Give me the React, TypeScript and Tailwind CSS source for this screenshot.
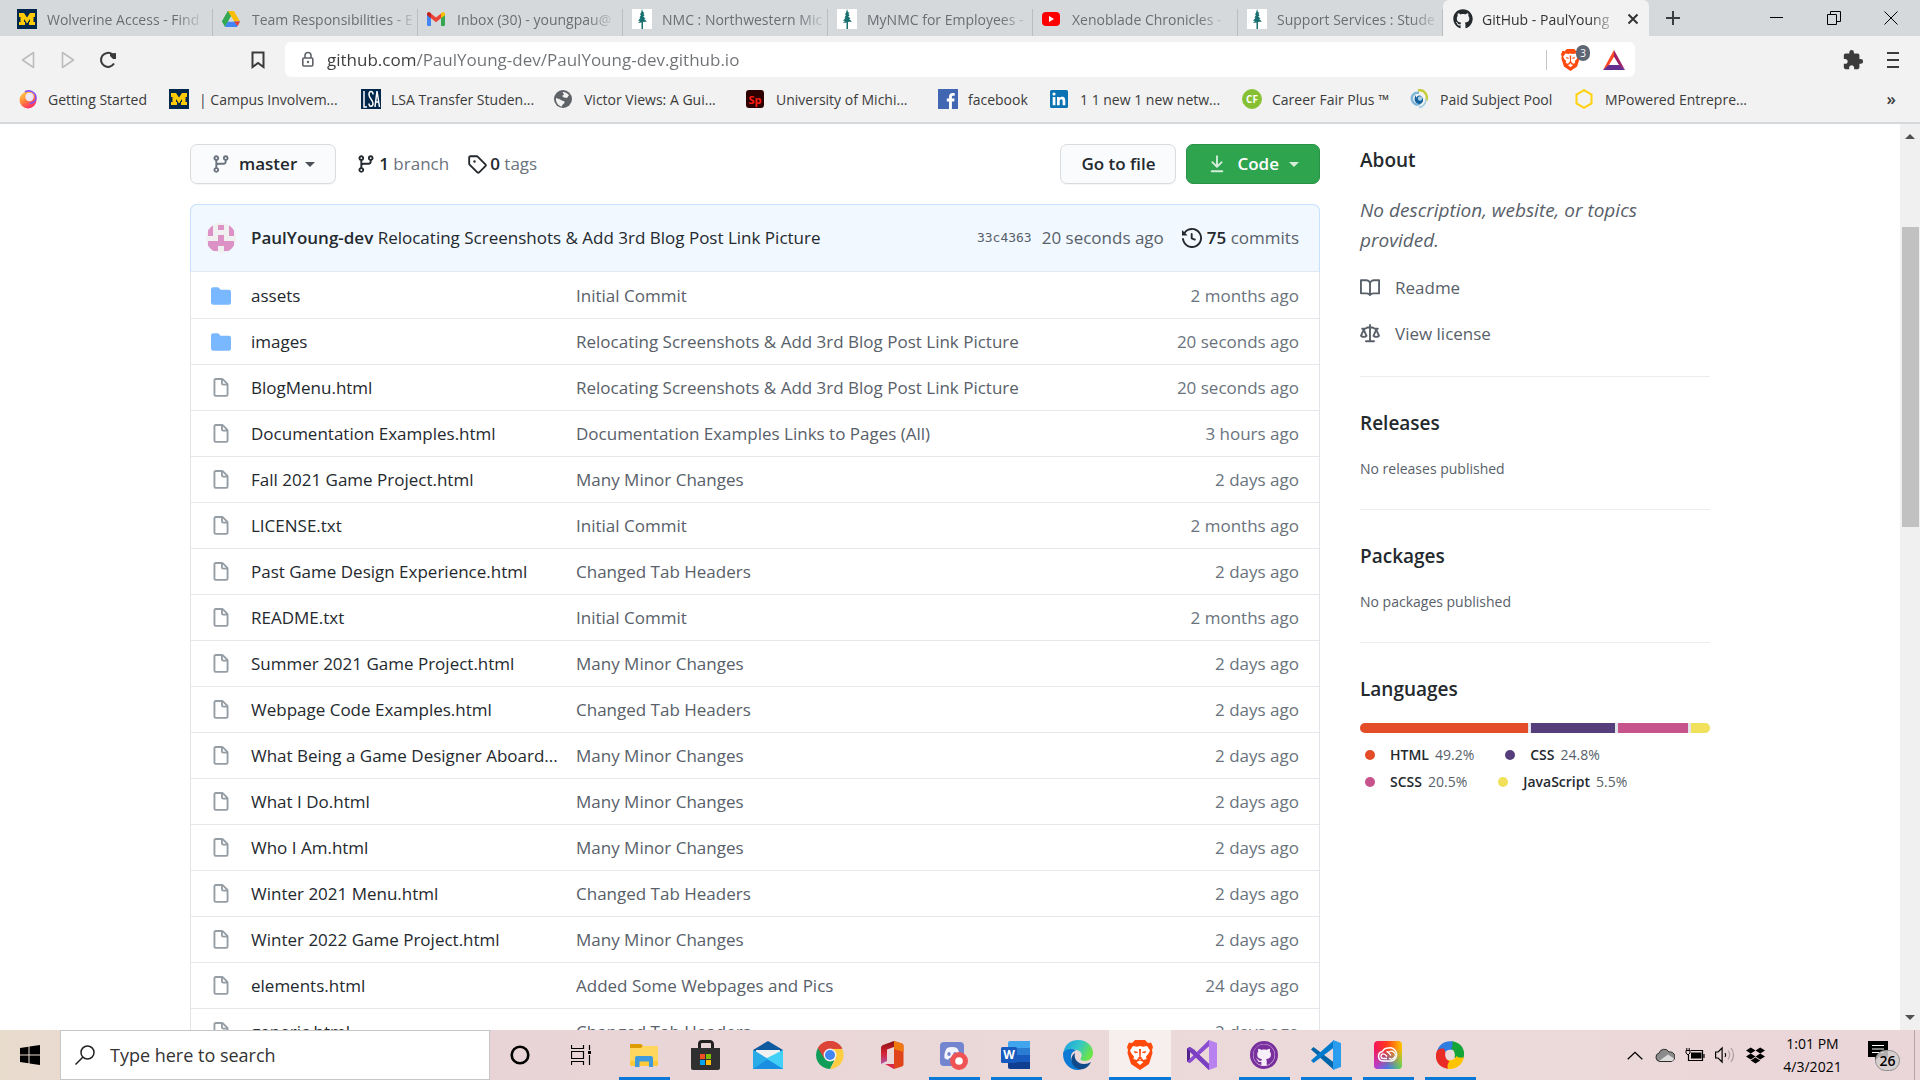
import type { ReactNode } from "react";
import { FaGithub, FaDropbox } from "react-icons/fa";
import { MdExtension } from "react-icons/md";

type IconProps = { className?: string };

/* ---------- 16px repository glyphs ---------- */

const glyphs = {
  branch:
    "M11.75 2.5a.75.75 0 100 1.5.75.75 0 000-1.5zm-2.25.75a2.25 2.25 0 113 2.122V6A2.5 2.5 0 0110 8.5H6a1 1 0 00-1 1v1.128a2.251 2.251 0 11-1.5 0V5.372a2.25 2.25 0 111.5 0v1.836A2.492 2.492 0 016 7h4a1 1 0 001-1v-.628A2.25 2.25 0 019.5 3.25zM4.25 12a.75.75 0 100 1.5.75.75 0 000-1.5zM3.5 3.25a.75.75 0 111.5 0 .75.75 0 01-1.5 0z",
  tag: "M2.5 7.775V2.75a.25.25 0 01.25-.25h5.025a.25.25 0 01.177.073l6.25 6.25a.25.25 0 010 .354l-5.025 5.025a.25.25 0 01-.354 0l-6.25-6.25a.25.25 0 01-.073-.177zm-1.5 0V2.75C1 1.784 1.784 1 2.75 1h5.025c.464 0 .91.184 1.238.513l6.25 6.25a1.75 1.75 0 010 2.474l-5.026 5.026a1.75 1.75 0 01-2.474 0l-6.25-6.25A1.75 1.75 0 011 7.775zM6 5a1 1 0 100 2 1 1 0 000-2z",
  file: "M3.75 1.5a.25.25 0 00-.25.25v11.5c0 .138.112.25.25.25h8.5a.25.25 0 00.25-.25V6H9.75A1.75 1.75 0 018 4.25V1.5H3.75zm5.75.56v2.19c0 .138.112.25.25.25h2.19L9.5 2.06zM2 1.75C2 .784 2.784 0 3.75 0h5.086c.464 0 .909.184 1.237.513l3.414 3.414c.329.328.513.773.513 1.237v8.086A1.75 1.75 0 0112.25 15h-8.5A1.75 1.75 0 012 13.25V1.75z",
  folder:
    "M1.75 1A1.75 1.75 0 000 2.75v10.5C0 14.216.784 15 1.75 15h12.5A1.75 1.75 0 0016 13.25v-8.5A1.75 1.75 0 0014.25 3h-6.5a.25.25 0 01-.2-.1l-.9-1.2c-.33-.44-.85-.7-1.4-.7h-3.5z",
  history:
    "M1.643 3.143L.427 1.927A.25.25 0 000 2.104V5.75c0 .138.112.25.25.25h3.646a.25.25 0 00.177-.427L2.715 4.215a6.5 6.5 0 11-1.18 4.458.75.75 0 10-1.493.154 8.001 8.001 0 101.6-5.684zM7.75 4a.75.75 0 01.75.75v2.992l2.028.812a.75.75 0 01-.557 1.392l-2.5-1A.75.75 0 017 8.25v-3.5A.75.75 0 017.75 4z",
  download:
    "M7.47 10.78a.75.75 0 001.06 0l3.75-3.75a.75.75 0 00-1.06-1.06L8.75 8.44V1.75a.75.75 0 00-1.5 0v6.69L4.78 5.97a.75.75 0 00-1.06 1.06l3.75 3.75zM3.75 13a.75.75 0 000 1.5h8.5a.75.75 0 000-1.5h-8.5z",
  book: "M0 1.75A.75.75 0 01.75 1h4.253c1.227 0 2.317.59 3 1.501A3.744 3.744 0 0111.006 1h4.245a.75.75 0 01.75.75v10.5a.75.75 0 01-.75.75h-4.507a2.25 2.25 0 00-1.591.659l-.622.621a.75.75 0 01-1.06 0l-.622-.621A2.25 2.25 0 005.258 13H.75a.75.75 0 01-.75-.75V1.75zm8.755 3a2.25 2.25 0 012.25-2.25H14.5v9h-3.757c-.71 0-1.4.201-1.992.572l.004-7.322zm-1.504 7.324l.004-5.073-.002-2.253A2.25 2.25 0 005.003 2.5H1.5v9h3.757a3.75 3.75 0 011.994.574z",
  law: "M8.75.75a.75.75 0 00-1.5 0V2h-.984c-.305 0-.604.08-.869.23l-1.288.737A.25.25 0 013.984 3H1.75a.75.75 0 000 1.5h.428L.066 9.192a.75.75 0 00.154.838l.53-.53-.53.53v.001l.002.002.002.002.006.006.016.015.045.04a3.514 3.514 0 00.686.45A4.492 4.492 0 003 11c.88 0 1.556-.22 2.023-.454a3.515 3.515 0 00.686-.45l.045-.04.016-.015.006-.006.002-.002.001-.002L5.25 9.5l.53.53a.75.75 0 00.154-.838L3.822 4.5h.162c.305 0 .604-.08.869-.23l1.289-.737a.25.25 0 01.124-.033h.984V13h-2.5a.75.75 0 000 1.5h6.5a.75.75 0 000-1.5h-2.5V3.5h.984a.25.25 0 01.124.033l1.29.736c.264.152.563.231.868.231h.162l-2.112 4.692a.75.75 0 00.154.838l.53-.53-.53.53v.001l.002.002.002.002.006.006.016.015.045.04a3.517 3.517 0 00.686.45A4.492 4.492 0 0013 11c.88 0 1.556-.22 2.023-.454a3.512 3.512 0 00.686-.45l.045-.04.01-.01.006-.005.006-.006.002-.002.001-.002-.529-.531.53.53a.75.75 0 00.154-.838L13.823 4.5h.427a.75.75 0 000-1.5h-2.234a.25.25 0 01-.124-.033l-1.29-.736A1.75 1.75 0 009.735 2H8.75V.75zM1.695 9.227c.285.135.718.273 1.305.273s1.02-.138 1.305-.273L3 6.327l-1.305 2.9zm10 0c.285.135.718.273 1.305.273s1.02-.138 1.305-.273L13 6.327l-1.305 2.9z",
};

function Glyph({ name, className = "" }: { name: keyof typeof glyphs; className?: string }) {
  return (
    <svg viewBox="0 0 16 16" fill="currentColor" className={`size-5 shrink-0 ${className}`} aria-hidden="true">
      <path fillRule="evenodd" d={glyphs[name]} />
    </svg>
  );
}

function Caret({ className = "" }: IconProps) {
  return (
    <svg viewBox="0 0 10 5" fill="currentColor" className={`w-[10px] h-[5px] ${className}`} aria-hidden="true">
      <path d="M0 0h10L5 5z" />
    </svg>
  );
}

/* ---------- Favicons ---------- */

function MichiganIcon() {
  return (
    <svg viewBox="0 0 20 20" className="size-5 shrink-0" aria-hidden="true">
      <path fill="#00274c" d="M0 0h20v20H0z" />
      <path fill="#ffcb05" d="M2 4h5l3 4.500L13 4h5v4h-1.500v5H18v3h-6v-3h1v-3l-3 4.500L7 10v3h1v3H2v-3h1.500V8H2z" />
    </svg>
  );
}
function DriveIcon() {
  return (
    <svg viewBox="0 0 18 16" className="w-[18px] h-4 shrink-0" aria-hidden="true">
      <path fill="#188038" d="M6 0h3v5.200L4 14 0 10.500z" />
      <path fill="#34a853" d="M6 0h3l.5 5L3 16 0 10.500z" />
      <path fill="#fbbc04" d="M6 0h6l6 10.500h-6z" />
      <path fill="#4285f4" d="M6 10.500h12L15 16H3z" />
      <path fill="#ea4335" d="M12 10.500h6L15.500 15z" />
      <path fill="#d5d9dc" d="m9 5.300 3 5.200H6z" />
    </svg>
  );
}
function GmailIcon() {
  return (
    <svg viewBox="0 0 18 14" className="w-[18px] h-[14px] shrink-0" aria-hidden="true">
      <path fill="#4285f4" d="M0 2h4v12H1.300A1.300 1.300 0 0 1 0 12.700z" />
      <path fill="#34a853" d="M14 2h4v10.700a1.300 1.300 0 0 1-1.300 1.300H14z" />
      <path fill="#ea4335" d="m4 1.500 5 4 5-4v4.800l-5 4-5-4z" />
      <path fill="#c5221f" d="M0 2C0 .2 2.200-.6 3.500.8L4 1.300v5L0 3.200z" />
      <path fill="#fbbc04" d="M18 2c0-1.800-2.200-2.600-3.500-1.200l-.5.5v5l4-3.100z" />
    </svg>
  );
}
function TreeIcon() {
  return (
    <svg viewBox="0 0 20 20" className="size-5 shrink-0" aria-hidden="true">
      <path fill="#fff" d="M0 0h20v20H0z" />
      <path fill="#17706f" d="m10 0 1 3 1.500 1-1 .8L12.500 7l-1.500.2 2.500 2.300-1.500.5 3 2.500-4 .5V20H9.500v-6.500L6 14l2-2-2-.5L8.500 9 7.500 8.500 9 6 8 5.500 9.300 3z" />
    </svg>
  );
}
function YoutubeIcon() {
  return (
    <svg viewBox="0 0 18 14" className="w-[18px] h-[14px] shrink-0" aria-hidden="true">
      <rect width="18" height="14" rx="4" fill="red" />
      <path fill="#fff" d="m7 4 5 3-5 3z" />
    </svg>
  );
}
function FirefoxIcon() {
  return (
    <svg viewBox="0 0 20 20" className="size-5 shrink-0" aria-hidden="true">
      <defs>
        <linearGradient id="ff2" x1="0" y1="0" x2=".6" y2="1">
          <stop offset="0" stopColor="#ffe14a" />
          <stop offset=".5" stopColor="#ff8a3c" />
          <stop offset="1" stopColor="#ff2c63" />
        </linearGradient>
      </defs>
      <circle cx="10" cy="11" r="8.500" fill="url(#ff2)" />
      <path d="M7 3c4-2.500 11-.5 11 6 0 3-3 5.500-6.500 5.500" stroke="#8650f5" strokeWidth="1.600" fill="none" />
      <circle cx="11.500" cy="8" r="4.200" fill="#ece8f6" />
    </svg>
  );
}
function LsaIcon() {
  return (
    <svg viewBox="0 0 20 20" className="size-5 shrink-0" aria-hidden="true">
      <path fill="#00274c" d="M0 0h20v20H0z" />
      <path
        d="M3 2v16h3M12 5.500C12 1.500 8 1.500 8 5.500S12 11 12 14.500s-4 4-4 0M14 18l2-16 2.500 16M14.500 13h3.500"
        fill="none"
        stroke="#fff"
        strokeWidth="1.500"
      />
    </svg>
  );
}
function GlobeIcon() {
  return (
    <svg viewBox="0 0 18 18" className="size-[18px] shrink-0" aria-hidden="true">
      <circle cx="9" cy="9" r="9" fill="#5f6368" />
      <path fill="#f2f2f2" d="M2 8c2 1 3 .5 5 2s4 .5 3.500 2.500S8 14 8 16.500C4 16 1.500 12 2 8zM8.500 2c2-.5 5 1 6.500 3l-2 3-3-.5L8 6l2-1.500z" />
    </svg>
  );
}
function SparkIcon() {
  return (
    <span className="flex size-[18px] shrink-0 items-center justify-center rounded-[3px] bg-[#2e0000] text-[11px] font-bold leading-none text-[#ff1f10]" aria-hidden="true">
      Sp
    </span>
  );
}
function FacebookIcon() {
  return (
    <svg viewBox="0 0 20 20" className="size-5 shrink-0" aria-hidden="true">
      <path fill="#4267b2" d="M0 0h20v20H0z" />
      <path fill="#fff" d="M11 20v-7.500H8.800v-3H11V7.700C11 5.300 12.400 4 14.600 4l2.100.1v2.700h-1.500c-1.100 0-1.300.5-1.300 1.300v1.400h2.700l-.4 3h-2.300V20z" />
    </svg>
  );
}
function LinkedinIcon() {
  return (
    <svg viewBox="0 0 18 18" className="size-[18px] shrink-0" aria-hidden="true">
      <rect width="18" height="18" rx="1.500" fill="#0b73b4" />
      <circle cx="4" cy="4" r="1.600" fill="#fff" />
      <path fill="#fff" d="M2.700 7h2.700v8.300H2.700zM7 7h2.600v1.200C10 7.400 11 6.800 12 6.800c2.800 0 3.300 1.800 3.300 4.200v4.300h-2.700v-3.800c0-1 0-2.200-1.300-2.200s-1.600 1-1.600 2.100v3.900H7z" />
    </svg>
  );
}
function CareerIcon() {
  return (
    <span className="flex size-5 shrink-0 items-center justify-center rounded-full border border-[#8dc63f] bg-[#86bf32] text-[10px] font-bold leading-none text-white" aria-hidden="true">
      CF
    </span>
  );
}
function PoolIcon() {
  return (
    <svg viewBox="0 0 18 20" className="w-[18px] h-5 shrink-0" aria-hidden="true">
      <path d="M8 1.500c6-1.500 10 4 8.500 10" fill="none" stroke="#c9cc3a" strokeWidth="2.500" />
      <path d="M16 10c0 5-3.500 8-7 8.500" fill="none" stroke="#9fcbe0" strokeWidth="1.500" />
      <path d="M9 4C4 3 1 7 2 11s5 5.500 8 4" fill="none" stroke="#7fb6d8" strokeWidth="2.500" />
      <path d="M6 6c-3 4-1 9 4 9 4-1 4-6 1-8-2-1-4 0-5 2z" fill="#12619c" />
      <circle cx="10" cy="9.500" r="2.200" fill="#a9d0e4" />
    </svg>
  );
}
function HexIcon() {
  return (
    <svg viewBox="0 0 18 20" className="w-[18px] h-5 shrink-0" aria-hidden="true">
      <path d="m9 1.200 7.500 4.400v8.800L9 18.800l-7.500-4.400V5.600z" fill="none" stroke="#ffd20a" strokeWidth="2" />
    </svg>
  );
}

/* ---------- Browser chrome ---------- */

const tabs: { title: string; icon: ReactNode }[] = [
  { title: "Wolverine Access - Find", icon: <MichiganIcon /> },
  { title: "Team Responsibilities - E", icon: <DriveIcon /> },
  { title: "Inbox (30) - youngpau@", icon: <GmailIcon /> },
  { title: "NMC : Northwestern Mic", icon: <TreeIcon /> },
  { title: "MyNMC for Employees -", icon: <TreeIcon /> },
  { title: "Xenoblade Chronicles -", icon: <YoutubeIcon /> },
  { title: "Support Services : Stude", icon: <TreeIcon /> },
];

function TabStrip() {
  return (
    <div className="flex h-9 bg-[#d5d9dc] pl-2 text-[14px] text-[#6b6e71]">
      {tabs.map((t) => (
        <div key={t.title} className="relative flex w-[205px] shrink-0 items-center">
          <button className="flex h-full w-full items-center pl-[9px] pt-[2px]">
            <span className="flex w-[30px] shrink-0 items-center">{t.icon}</span>
            <span className="whitespace-nowrap text-left [mask-image:linear-gradient(to_right,black_85%,#0003)]">
              {t.title}
            </span>
          </button>
          <span className="absolute bottom-0 right-0 h-[27px] w-px bg-[#b9bec1]" />
        </div>
      ))}
      <div className="flex w-[206px] shrink-0 items-center rounded-t-md bg-[#f2f2f2] pl-[10px] pr-2 pt-[2px] text-[#333]">
        <FaGithub className="size-5 shrink-0 text-[#24292e]" />
        <span className="ml-[9px] whitespace-nowrap [mask-image:linear-gradient(to_right,black_85%,#0005)]">
          GitHub - PaulYoung
        </span>
        <button aria-label="Close tab" className="ml-auto flex size-4 items-center justify-center">
          <svg viewBox="0 0 12 12" className="size-3" aria-hidden="true">
            <path d="m1.500 1.500 9 9m0-9-9 9" stroke="#333" strokeWidth="2" />
          </svg>
        </button>
      </div>
      <button aria-label="New tab" className="ml-[14px] flex w-5 items-center justify-center">
        <svg viewBox="0 0 16 16" className="size-4" aria-hidden="true">
          <path d="M8 1v14M1 8h14" stroke="#3b3e40" strokeWidth="2" />
        </svg>
      </button>
      <div className="ml-auto flex">
        <button aria-label="Minimize" className="flex w-[57px] items-center justify-center">
          <svg viewBox="0 0 14 14" className="size-[14px]" aria-hidden="true">
            <path d="M0 6.500h13" stroke="#000" />
          </svg>
        </button>
        <button aria-label="Restore" className="flex w-[57px] items-center justify-center">
          <svg viewBox="0 0 14 14" className="size-[14px]" aria-hidden="true">
            <path d="M.5 3.500h9v10h-9zM3.500 3V.5h10v10H10" stroke="#000" fill="none" />
          </svg>
        </button>
        <button aria-label="Close" className="flex w-[58px] items-center justify-center">
          <svg viewBox="0 0 14 14" className="size-[14px]" aria-hidden="true">
            <path d="m.5.5 13 13m0-13-13 13" stroke="#000" />
          </svg>
        </button>
      </div>
    </div>
  );
}

function ShieldIcon({ className = "" }: IconProps) {
  return (
    <svg viewBox="0 0 26 30" className={className} aria-hidden="true">
      <path fill="#ff4a0d" d="M8 0h10l3 3 3-.5 2 4.500-1 3 .5 3L22 24l-9 6-9-6L.5 13 1 10 0 7l2-4.500L5 3z" />
      <path
        fill="#fff"
        d="m6 6 4 .8L13 6l3 .8 4-.8 3 4.500-1.500 3-2.500 3 .5 2.500-3 1-1.500-1.500L13 20l-2-1.500L9.500 20l-3-1 .5-2.500-2.500-3L3 10.500zM9.500 22l3.500-1.500 3.500 1.500-3.500 3z"
      />
      <path fill="#ff4a0d" d="m6.500 11 4 .8.500 1-3 .5zm13 0-4 .8-.5 1 3 .5zM12 9h2l-.3 8 2 1-2.700 1.500L10.300 18l2-1z" />
    </svg>
  );
}

function AddressBar() {
  return (
    <div className="flex h-[47px] items-center bg-[#f2f2f2] pl-[18px] pr-[21px]">
      <button aria-label="Back" className="flex w-10 items-center pl-[3px]">
        <svg viewBox="0 0 14 18" className="w-[14px] h-[18px]" aria-hidden="true">
          <path d="M12.500 1.500v15L1.500 9z" fill="none" stroke="#bdbdbd" strokeWidth="1.600" strokeLinejoin="round" />
        </svg>
      </button>
      <button aria-label="Forward" className="flex w-10 items-center pl-[3px]">
        <svg viewBox="0 0 14 18" className="w-[14px] h-[18px]" aria-hidden="true">
          <path d="M1.500 1.500v15l11-7.500z" fill="none" stroke="#bdbdbd" strokeWidth="1.600" strokeLinejoin="round" />
        </svg>
      </button>
      <button aria-label="Reload" className="flex w-5 items-center justify-center">
        <svg viewBox="0 0 18 18" className="size-[18px]" aria-hidden="true">
          <path d="M13.500 3.500A7 7 0 1 0 15 12.500" fill="none" stroke="#3b3b3b" strokeWidth="2" />
          <path d="M11 2.500 17 2v6h-3l-3-3z" fill="#3b3b3b" />
        </svg>
      </button>
      <button aria-label="Bookmark this page" className="ml-[130px] flex w-5 items-center justify-center">
        <svg viewBox="0 0 14 18" className="w-[14px] h-[18px]" aria-hidden="true">
          <path d="M1.500 1.500h11v14.500L7 12l-5.500 4z" fill="none" stroke="#3b3b3b" strokeWidth="2" />
        </svg>
      </button>
      <div className="ml-[17px] mr-[207px] flex h-[35px] min-w-0 flex-1 items-center rounded-md bg-white pl-4 pr-[10px]">
        <svg viewBox="0 0 14 18" className="w-[14px] h-[18px] shrink-0" aria-hidden="true">
          <rect x="1.800" y="7" width="10" height="8" rx="1" fill="none" stroke="#5f6368" strokeWidth="1.600" />
          <path d="M4 7V4.500a3 3 0 0 1 6 0V7" fill="none" stroke="#5f6368" strokeWidth="1.600" />
          <circle cx="7" cy="11" r="1.200" fill="#5f6368" />
        </svg>
        <input
          aria-label="Address"
          className="ml-3 min-w-0 flex-1 bg-[linear-gradient(to_right,#3b3b3b_90px,#6f7275_90px)] bg-clip-text text-[17px] text-transparent outline-none"
          defaultValue="github.com/PaulYoung-dev/PaulYoung-dev.github.io"
        />
        <span className="mr-[14px] h-5 w-px bg-[#c4c7ca]" />
        <button aria-label="Shields" className="relative flex w-[42px]">
          <ShieldIcon className="h-[22px] w-[19px]" />
          <span className="absolute -top-1 left-[15px] flex h-4 w-[14px] items-center justify-center rounded-full bg-[#5f6673] text-[10px] leading-none text-white">
            3
          </span>
        </button>
        <button aria-label="Rewards" className="flex">
          <svg viewBox="0 0 22 20" className="w-[22px] h-5" aria-hidden="true">
            <path fill="#ff4724" d="M11 0v7l-5 8-6 5z" />
            <path fill="#9e1f63" d="M11 0v7l5 8 6 5z" />
            <path fill="#662d91" d="m0 20 5.500-5h11l5.500 5z" />
            <path fill="#fff" d="m11 7 4.500 8h-9z" />
          </svg>
        </button>
      </div>
      <button aria-label="Extensions" className="flex">
        <MdExtension className="size-[22px] text-[#3b3b3b]" />
      </button>
      <button aria-label="Menu" className="ml-[23px] flex">
        <svg viewBox="0 0 12 16" className="w-3 h-4" aria-hidden="true">
          <path d="M0 1h12M0 8h12M0 15h12" stroke="#3b3b3b" strokeWidth="2" />
        </svg>
      </button>
    </div>
  );
}

const bookmarks: { label: string; icon: ReactNode; width: string }[] = [
  { label: "Getting Started", icon: <FirefoxIcon />, width: "w-[151px]" },
  { label: "| Campus Involvem...", icon: <MichiganIcon />, width: "w-[192px]" },
  { label: "LSA Transfer Studen...", icon: <LsaIcon />, width: "w-[193px]" },
  { label: "Victor Views: A Gui...", icon: <GlobeIcon />, width: "w-[192px]" },
  { label: "University of Michi...", icon: <SparkIcon />, width: "w-[192px]" },
  { label: "facebook", icon: <FacebookIcon />, width: "w-[112px]" },
  { label: "1 1 new 1 new netw...", icon: <LinkedinIcon />, width: "w-[192px]" },
  { label: "Career Fair Plus ™", icon: <CareerIcon />, width: "w-[168px]" },
  { label: "Paid Subject Pool", icon: <PoolIcon />, width: "w-[165px]" },
  { label: "MPowered Entrepre...", icon: <HexIcon />, width: "w-[185px]" },
];

function BookmarksBar() {
  return (
    <nav aria-label="Bookmarks" className="flex h-[41px] items-start border-b-2 border-[#d5d9dc] bg-[#f2f2f2] pl-[18px] pr-6 pt-1 text-[14px] text-[#3b3b3b]">
      {bookmarks.map((b) => (
        <a key={b.label} href="#" className={`flex h-6 shrink-0 items-center whitespace-nowrap ${b.width}`}>
          <span className="flex w-[30px] shrink-0 items-center">{b.icon}</span>
          {b.label}
        </a>
      ))}
      <button aria-label="More bookmarks" className="ml-auto flex h-6 items-center text-[17px] font-semibold">
        »
      </button>
    </nav>
  );
}

/* ---------- Repository page ---------- */

type Entry = { name: string; message: string; age: string; folder?: boolean };

const entries: Entry[] = [
  { name: "assets", message: "Initial Commit", age: "2 months ago", folder: true },
  { name: "images", message: "Relocating Screenshots & Add 3rd Blog Post Link Picture", age: "20 seconds ago", folder: true },
  { name: "BlogMenu.html", message: "Relocating Screenshots & Add 3rd Blog Post Link Picture", age: "20 seconds ago" },
  { name: "Documentation Examples.html", message: "Documentation Examples Links to Pages (All)", age: "3 hours ago" },
  { name: "Fall 2021 Game Project.html", message: "Many Minor Changes", age: "2 days ago" },
  { name: "LICENSE.txt", message: "Initial Commit", age: "2 months ago" },
  { name: "Past Game Design Experience.html", message: "Changed Tab Headers", age: "2 days ago" },
  { name: "README.txt", message: "Initial Commit", age: "2 months ago" },
  { name: "Summer 2021 Game Project.html", message: "Many Minor Changes", age: "2 days ago" },
  { name: "Webpage Code Examples.html", message: "Changed Tab Headers", age: "2 days ago" },
  { name: "What Being a Game Designer Aboard...", message: "Many Minor Changes", age: "2 days ago" },
  { name: "What I Do.html", message: "Many Minor Changes", age: "2 days ago" },
  { name: "Who I Am.html", message: "Many Minor Changes", age: "2 days ago" },
  { name: "Winter 2021 Menu.html", message: "Changed Tab Headers", age: "2 days ago" },
  { name: "Winter 2022 Game Project.html", message: "Many Minor Changes", age: "2 days ago" },
  { name: "elements.html", message: "Added Some Webpages and Pics", age: "24 days ago" },
  { name: "generic.html", message: "Changed Tab Headers", age: "2 days ago" },
];

function Avatar() {
  return (
    <svg viewBox="0 0 30 30" className="size-[30px] shrink-0" aria-hidden="true">
      <clipPath id="round">
        <circle cx="15" cy="15" r="15" />
      </clipPath>
      <g clipPath="url(#round)">
        <path fill="#f0f0f0" d="M0 0h30v30H0z" />
        <path fill="#dc92c5" d="M2 2h5v11H2zM12 2h6v5h-6zM23 2h5v11h-5zM12 12h6v6h-6zM2 18h26v5H2zM2 23h10v5H2zM18 23h10v5H18z" />
      </g>
    </svg>
  );
}

function FileBrowser() {
  return (
    <main className="min-w-0 flex-1">
      <div className="flex items-center">
        <button className="flex h-10 items-center rounded-[7px] border border-[#d9dcdf] bg-[#fafbfc] px-5 font-semibold shadow-[0_1px_0_rgba(27,31,35,0.04)]">
          <Glyph name="branch" className="mr-2 text-[#6a737d]" />
          master
          <Caret className="ml-2 text-[#4c5157]" />
        </button>
        <a href="#" className="ml-5 flex items-center text-[#6a737d]">
          <Glyph name="branch" className="text-[#24292e]" />
          <span className="ml-[3px]"><strong className="font-semibold text-[#24292e]">1</strong> branch</span>
        </a>
        <a href="#" className="ml-[18px] flex items-center text-[#6a737d]">
          <Glyph name="tag" className="text-[#24292e]" />
          <span className="ml-[3px]"><strong className="font-semibold text-[#24292e]">0</strong> tags</span>
        </a>
        <button className="ml-auto flex h-10 items-center rounded-[7px] border border-[#d9dcdf] bg-[#fafbfc] px-5 font-semibold shadow-[0_1px_0_rgba(27,31,35,0.04)]">
          Go to file
        </button>
        <button className="ml-[10px] flex h-10 items-center rounded-[7px] border border-[#2a9147] bg-[#2ea44f] px-5 font-semibold text-white">
          <Glyph name="download" className="mr-[10px] text-[#d5edda]" />
          Code
          <Caret className="ml-[10px] text-[#d5edda]" />
        </button>
      </div>

      <div className="mt-5 rounded-t-[7px] border border-[#e1e4e8]">
        <div className="-mx-px -mt-px flex h-[68px] items-center rounded-t-[7px] border border-[#c8e1ff] border-b-[#e1e9f2] bg-[#f1f8ff] pl-[15px] pr-5">
          <Avatar />
          <p className="ml-[15px] min-w-0 flex-1 whitespace-nowrap">
            <a href="#" className="font-semibold">PaulYoung-dev</a>{" "}
            <a href="#">Relocating Screenshots &amp; Add 3rd Blog Post Link Picture</a>
          </p>
          <a href="#" className="font-['DejaVu_Sans_Mono',monospace] text-[13px] text-[#586069]">33c4363</a>
          <span className="ml-[10px] text-[#586069]">20 seconds ago</span>
          <a href="#" className="ml-[18px] flex items-center text-[#586069]">
            <Glyph name="history" className="text-[#24292e]" />
            <span className="ml-[5px]"><strong className="font-semibold text-[#24292e]">75</strong> commits</span>
          </a>
        </div>
        <table className="w-full table-fixed">
          <caption className="sr-only">Files</caption>
          <colgroup>
            <col className="w-[60px]" />
            <col className="w-[325px]" />
            <col />
            <col className="w-[160px]" />
          </colgroup>
          <tbody>
            {entries.map((e) => (
              <tr key={e.name} className="h-[46px] border-b border-[#e6e8ec]">
                <td className="pl-5 pt-[2px]">
                  <Glyph name={e.folder ? "folder" : "file"} className={e.folder ? "text-[#79b8ff]" : "text-[#959da5]"} />
                </td>
                <td className="whitespace-nowrap pt-[2px]">
                  <a href="#">{e.name}</a>
                </td>
                <td className="truncate pt-[2px] text-[#586069]">
                  <a href="#">{e.message}</a>
                </td>
                <td className="pr-5 pt-[2px] text-right text-[#6a737d]">{e.age}</td>
              </tr>
            ))}
          </tbody>
        </table>
      </div>
    </main>
  );
}

const languages = [
  { name: "HTML", share: 49.2, fill: "bg-[#e34c26]" },
  { name: "CSS", share: 24.8, fill: "bg-[#563d7c]" },
  { name: "SCSS", share: 20.5, fill: "bg-[#c6538c]" },
  { name: "JavaScript", share: 5.5, fill: "bg-[#f1e05a]" },
];

function Sidebar() {
  return (
    <aside className="w-[350px] shrink-0">
      <section className="border-b border-[#eaecef] pb-[29px]">
        <h2 className="text-[19px] font-semibold leading-[32px]">About</h2>
        <p className="mt-[19px] text-[19px] italic leading-[30px] text-[#586069]">No description, website, or topics provided.</p>
        <a href="#" className="mt-5 flex items-center text-[#586069] leading-[26px]">
          <Glyph name="book" className="mr-[15px]" />
          Readme
        </a>
        <a href="#" className="mt-5 flex items-center text-[#586069] leading-[26px]">
          <Glyph name="law" className="mr-[15px]" />
          View license
        </a>
      </section>
      <section className="border-b border-[#eaecef] pb-[29px] pt-[31px]">
        <h2 className="text-[19px] font-semibold leading-[30px]">Releases</h2>
        <p className="mt-5 text-[14px] leading-[22px] text-[#586069]">No releases published</p>
      </section>
      <section className="border-b border-[#eaecef] pb-[29px] pt-[31px]">
        <h2 className="text-[19px] font-semibold leading-[30px]">Packages</h2>
        <p className="mt-5 text-[14px] leading-[22px] text-[#586069]">No packages published</p>
      </section>
      <section className="pt-[31px]">
        <h2 className="text-[19px] font-semibold leading-[30px]">Languages</h2>
        <div className="mt-[19px] flex h-[10px] gap-[3px] overflow-hidden rounded-full bg-[#e1e4e8]">
          {languages.map((l) => (
            <span key={l.name} className={l.fill} style={{ flexGrow: l.share, flexBasis: 0 }} />
          ))}
        </div>
        <ul className="mt-2 flex flex-wrap text-[14px] leading-[27px]">
          {languages.map((l) => (
            <li key={l.name} className="mr-[26px] flex items-center pl-[5px]">
              <span className={`mr-[15px] size-[10px] rounded-full ${l.fill}`} />
              <span className="font-semibold">{l.name}</span>
              <span className="ml-[6px] text-[#586069]">{l.share}%</span>
            </li>
          ))}
        </ul>
      </section>
    </aside>
  );
}

function Scrollbar() {
  return (
    <div className="flex w-5 shrink-0 flex-col items-center bg-[#f0f0f0] py-[10px]" aria-hidden="true">
      <Caret className="rotate-180 text-[#505050]" />
      <div className="mt-[88px] h-[300px] w-[17px] bg-[#c1c1c1]" />
      <Caret className="mt-auto text-[#505050]" />
    </div>
  );
}

/* ---------- Taskbar ---------- */

function ExplorerIcon() {
  return (
    <svg viewBox="0 0 28 24" className="w-7 h-6" aria-hidden="true">
      <path fill="#dd9c00" d="M0 1h11l2 2-1 4H0z" />
      <path fill="#ffd75e" d="M0 5h11l2-2h15v20H0z" />
      <path fill="#ffc93a" d="M0 18h28v5H0z" />
      <path fill="#3f9bdc" d="M5 24V15a2 2 0 0 1 2-2h14a2 2 0 0 1 2 2v9h-4v-5.500H9.500V24z" />
    </svg>
  );
}
function StoreIcon() {
  return (
    <svg viewBox="0 0 30 30" className="size-[30px]" aria-hidden="true">
      <path d="M8.500 10V4a2.500 2.500 0 0 1 2.500-2.500h8A2.500 2.500 0 0 1 21.500 4v6" fill="none" stroke="#222" strokeWidth="3" />
      <path fill="#303030" d="M0 8h29v20a2 2 0 0 1-2 2H2a2 2 0 0 1-2-2z" />
      <path fill="#f25022" d="M9 14h5v5H9z" />
      <path fill="#7fba00" d="M15 14h5v5h-5z" />
      <path fill="#00a4ef" d="M9 20h5v5H9z" />
      <path fill="#ffb900" d="M15 20h5v5h-5z" />
    </svg>
  );
}
function MailIcon() {
  return (
    <svg viewBox="0 0 30 28" className="w-[30px] h-7" aria-hidden="true">
      <path fill="#0f5a9f" d="M15 0 30 9v5H0V9z" />
      <path fill="#f1f1f1" d="M3 9h24v8H3z" />
      <path fill="#27b3ee" d="M0 9l15 9L30 9v19H0z" />
      <path fill="#42d0f7" d="M30 9v19L13 17.500z" />
      <path fill="#1a8ee0" d="m13 17.500 17 10.500H0z" />
      <path fill="#29abe8" d="m0 9 15 9-15 10z" />
    </svg>
  );
}
function ChromeIcon() {
  return (
    <svg viewBox="0 0 28 28" className="size-7" aria-hidden="true">
      <path fill="#db4437" d="M14 14 1.900 7A14 14 0 0 1 26.100 7z" />
      <path fill="#0f9d58" d="M14 14v0L1.900 7A14 14 0 0 0 14 28l4-8z" />
      <path fill="#ffcd40" d="M14 14 20 17.500 14 28A14 14 0 0 0 26.100 7.700H14z" />
      <path fill="#db4437" d="M14 7.700h12.400A14 14 0 0 0 1.900 7L8 17z" />
      <circle cx="14" cy="14" r="6.400" fill="#f1f1f1" />
      <circle cx="14" cy="14" r="5" fill="#4285f4" />
    </svg>
  );
}
function OfficeIcon() {
  return (
    <svg viewBox="0 0 24 28" className="w-6 h-7" aria-hidden="true">
      <defs>
        <linearGradient id="of" x1="0" y1="0" x2="0" y2="1">
          <stop offset="0" stopColor="#8b1013" />
          <stop offset=".55" stopColor="#d62436" />
          <stop offset="1" stopColor="#b254a8" />
        </linearGradient>
      </defs>
      <path fill="url(#of)" d="M14 0v6L7 8.500v11.500l-6 3V6.500A3 3 0 0 1 3 4z" />
      <path fill="#e0441b" d="M14 0 22 2.500A2 2 0 0 1 23.500 4.500v19a2 2 0 0 1-1.500 2L14 28z" />
      <path fill="#ef7a10" d="M14 0 22 2.500 23.500 5v6L14 8z" />
      <path fill="#d9284a" d="M5 23h9v5z" />
    </svg>
  );
}
function DiscordIcon() {
  return (
    <svg viewBox="0 0 28 30" className="h-[30px] w-7" aria-hidden="true">
      <rect y="2" width="24" height="24" rx="4" fill="#7385ce" />
      <path fill="#f4f5fc" d="M7 8c3-1.500 7-1.500 10 0 2 3 3 6 2.500 10-1.500 1-3 1.500-4 1.500L14.500 18h-5l-1 1.500c-2 0-3-.5-4-1.500C4 14 5 11 7 8z" />
      <ellipse cx="9" cy="14" rx="1.700" ry="1.900" fill="#7385ce" />
      <ellipse cx="15" cy="14" rx="1.700" ry="1.900" fill="#7385ce" />
      <circle cx="19" cy="21" r="9" fill="#ef5353" />
      <circle cx="19" cy="21" r="3.800" fill="#fff" />
    </svg>
  );
}
function WordIcon() {
  return (
    <span className="relative flex h-7 w-[30px]" aria-hidden="true">
      <svg viewBox="0 0 30 28" className="h-7 w-[30px]">
        <path fill="#41a5ee" d="M7 2a2 2 0 0 1 2-2h20v7H7z" />
        <path fill="#2b7cd3" d="M7 7h22v7H7z" />
        <path fill="#185abd" d="M7 14h22v7H7z" />
        <path fill="#103f91" d="M7 21h22v7H9a2 2 0 0 1-2-2z" />
        <rect y="6" width="16" height="16" rx="1.500" fill="#185abd" />
      </svg>
      <span className="absolute left-0 top-[6px] flex size-4 items-center justify-center text-[12px] font-bold leading-none text-white">W</span>
    </span>
  );
}
function EdgeIcon() {
  return (
    <svg viewBox="0 0 30 30" className="size-[30px]" aria-hidden="true">
      <defs>
        <linearGradient id="ed1" x1="0" y1="0" x2="1" y2=".4">
          <stop offset="0" stopColor="#1b9de2" />
          <stop offset=".55" stopColor="#34c6c8" />
          <stop offset="1" stopColor="#6be34b" />
        </linearGradient>
      </defs>
      <path fill="url(#ed1)" d="M.5 12C2 4 8 0 15 0c9 0 15 6 15 13 0 5-4 8-8 8-3 0-5-1-4.500-2.500 2.500-3 1-7.500-4-8.500C8 9 3 10 .5 12z" />
      <path fill="#0c7ad4" d="M.3 12C3 9 9 8 13 10.500c-4 1-5.500 4-5 8C9 24 13 28.500 18 29.600 7 32-1.500 22 .3 12z" />
      <path fill="#114a8b" d="M12 13c-1.500 5 2 11 9 11 3 0 5-.7 7-2-2 4.500-6 7.500-11 7.500C9 28 5 18 12 13z" />
    </svg>
  );
}
function VisualStudioIcon() {
  return (
    <svg viewBox="0 0 30 30" className="size-[30px]" aria-hidden="true">
      <path fill="#52218a" d="M0 8.500 3 7v16l-3-1.500z" />
      <path fill="#6c33af" d="m3 7 4 2.500L22 24v6L3 12z" />
      <path fill="#9455ce" d="M3 23 22 6V0L7 17.500z" />
      <path fill="#8a4cd0" d="m0 21.500 3 1.500L22 6V0z" />
      <path fill="#7b3fc4" d="M0 8.500 22 30v-6L3 7z" />
      <path fill="#b980f0" d="m22 0 8 3v24l-8 3z" />
    </svg>
  );
}
function VsCodeIcon() {
  return (
    <svg viewBox="0 0 30 30" className="size-[30px]" aria-hidden="true">
      <path fill="#0065a9" d="M0 9.500 2.500 7 23 22.500V30z" />
      <path fill="#007acc" d="M0 20.500 2.500 23 23 7.500V0z" />
      <path fill="#2a9df0" d="m22 0 8 3v24l-8 3z" />
    </svg>
  );
}
function CreativeCloudIcon() {
  return (
    <svg viewBox="0 0 28 28" className="size-7" aria-hidden="true">
      <defs>
        <linearGradient id="cc1" x1="0" y1="0" x2="1" y2="0">
          <stop offset="0" stopColor="#f5145c" />
          <stop offset=".45" stopColor="#ff3a1c" />
          <stop offset="1" stopColor="#ffc400" />
        </linearGradient>
        <linearGradient id="cc2" x1="0" y1="0" x2="1" y2="0">
          <stop offset="0" stopColor="#c13bd8" />
          <stop offset=".5" stopColor="#3f7df0" />
          <stop offset="1" stopColor="#58d85a" />
        </linearGradient>
        <linearGradient id="ccm" x1="0" y1="0" x2="0" y2="1">
          <stop offset=".25" stopColor="#fff" stopOpacity="0" />
          <stop offset="1" stopColor="#fff" />
        </linearGradient>
        <mask id="ccmask">
          <path fill="url(#ccm)" d="M0 0h28v28H0z" />
        </mask>
      </defs>
      <rect width="28" height="28" rx="4" fill="url(#cc1)" />
      <rect width="28" height="28" rx="4" fill="url(#cc2)" mask="url(#ccmask)" />
      <path
        d="M9 20a4.800 4.800 0 0 1-.6-9.500A6.500 6.500 0 0 1 14.500 7 6.500 6.500 0 1 1 17.500 20z"
        fill="none"
        stroke="#fff"
        strokeWidth="1.500"
      />
      <path
        d="M13 17.500H9.300a2.300 2.300 0 0 1 0-4.700c1.500 0 2.500 1.200 3.700 2.700M12.500 10.500c1.500 0 2.500 1.500 4.500 4M15 17.300a3.900 3.900 0 1 0-.8-5.500"
        fill="none"
        stroke="#fff"
        strokeWidth="1.300"
      />
    </svg>
  );
}
function SwirlIcon() {
  return (
    <svg viewBox="0 0 28 28" className="size-7" aria-hidden="true">
      <path fill="#2f7de1" d="M1 11C2 4 9-1 17 .5c3 1 4 3 4 6L16 9c-4-1-7 1-8 4-2-2-5-2.500-7-2z" />
      <path fill="#13a538" d="M16 .2C25 1 30 9 27.500 17c-1 3-4 4-6.500 3.500L18.500 16c1-4-.5-7-3.500-8.500 2-2 2-5 1-7.300z" />
      <path fill="#ffc400" d="M27.800 16C27 24 19 29.500 11 27.500c-3-1-4-4-3.500-7L12 19c4 1 7-1 8.500-4 2 2 5 2 7.300 1z" />
      <path fill="#ea2c26" d="M12 27.800C3 27-2 19 .5 11c1-3 4-4 7.500-3.500L9.500 12c-1 4 1 7 4 8.500-2 2-2.500 5-1.500 7.300z" />
      <circle cx="14" cy="14" r="4.500" fill="#ecdada" />
    </svg>
  );
}

const apps: { name: string; icon: ReactNode; running?: boolean; active?: boolean }[] = [
  { name: "File Explorer", icon: <ExplorerIcon />, running: true },
  { name: "Microsoft Store", icon: <StoreIcon /> },
  { name: "Mail", icon: <MailIcon /> },
  { name: "Google Chrome", icon: <ChromeIcon /> },
  { name: "Office", icon: <OfficeIcon /> },
  { name: "Discord", icon: <DiscordIcon />, running: true },
  { name: "Word", icon: <WordIcon />, running: true },
  { name: "Microsoft Edge", icon: <EdgeIcon /> },
  { name: "Brave", icon: <ShieldIcon className="h-[30px] w-[26px]" />, active: true },
  { name: "Visual Studio", icon: <VisualStudioIcon /> },
  {
    name: "GitHub Desktop",
    icon: (
      <span className="flex size-7 items-center justify-center rounded-full border-[3px] border-[#7a2f9e] bg-[#f6eef8]">
        <FaGithub className="size-[22px] shrink-0 text-[#7a2f9e]" />
      </span>
    ),
    running: true,
  },
  { name: "Visual Studio Code", icon: <VsCodeIcon />, running: true },
  { name: "Creative Cloud", icon: <CreativeCloudIcon />, running: true },
  { name: "ShareX", icon: <SwirlIcon />, running: true },
];

function Taskbar() {
  return (
    <footer className="flex h-[50px] shrink-0 bg-[linear-gradient(to_right,#e8dccd_0,#e9dad0_60px,#e8d4d6_490px,#ecdada_1400px,#ead5d8_100%)] text-black">
      <button aria-label="Start" className="flex w-[60px] items-center justify-center">
        <svg viewBox="0 0 20 20" className="size-5" aria-hidden="true">
          <path d="M0 3 8.500 1.800v7.700H0zM9.500 1.600 20 0v9.500H9.500zM0 10.500h8.500v7.700L0 17zM9.500 10.500H20V20L9.500 18.400z" />
        </svg>
      </button>
      <label className="flex w-[430px] items-center border border-[#c6c6c6] bg-white pl-[14px]">
        <svg viewBox="0 0 20 20" className="size-5 shrink-0" aria-hidden="true">
          <circle cx="12.500" cy="7.500" r="6.500" fill="none" stroke="#222" strokeWidth="1.500" />
          <path d="m8 12-7.500 7.500" stroke="#222" strokeWidth="1.500" />
        </svg>
        <span className="sr-only">Search</span>
        <input className="ml-[15px] min-w-0 flex-1 text-[18px] outline-none placeholder:text-[#333]" placeholder="Type here to search" />
      </label>
      <button aria-label="Cortana" className="flex w-[60px] items-center justify-center">
        <svg viewBox="0 0 20 20" className="size-5" aria-hidden="true">
          <circle cx="10" cy="10" r="8.300" fill="none" stroke="#000" strokeWidth="2.600" />
        </svg>
      </button>
      <button aria-label="Task View" className="mr-px flex w-[62px] items-center justify-center">
        <svg viewBox="0 0 20 20" className="size-5" aria-hidden="true">
          <path d="M.5 0v3.500h12V0M.5 20v-3.500h12V20M.5 6.500h12v7H.5zM18.500 0v5M18.500 10v10" fill="none" stroke="#000" strokeWidth="1.200" />
          <path d="M17 6h3v3h-3z" />
        </svg>
      </button>
      {apps.map((a) => (
        <button
          key={a.name}
          aria-label={a.name}
          className={`relative flex w-[62px] items-center justify-center ${a.active ? "bg-[#f6efee]" : ""}`}
        >
          {a.icon}
          {a.running && <span className="absolute bottom-0 left-[6px] h-[3px] w-[51px] bg-[#0a78d6]" />}
          {a.active && <span className="absolute bottom-0 left-0 h-[3px] w-full bg-[#0a78d6]" />}
        </button>
      ))}
      <div className="ml-auto flex items-center">
        <button aria-label="Show hidden icons" className="flex w-[30px] justify-center">
          <svg viewBox="0 0 16 9" className="h-[9px] w-4" aria-hidden="true">
            <path d="m.7 8.300 7.300-7 7.300 7" fill="none" stroke="#000" strokeWidth="1.300" />
          </svg>
        </button>
        <button aria-label="OneDrive" className="flex w-[30px] justify-center">
          <svg viewBox="0 0 20 14" className="h-[14px] w-5" aria-hidden="true">
            <path d="M5 13.500a4.300 4.300 0 0 1-1-8.400A5.500 5.500 0 0 1 14 4a4.800 4.800 0 0 1 2 9.500z" fill="#8b8b8b" stroke="#2b2b2b" />
            <path d="M4 13 13 6.500l6 4c-.5 2-2 2.500-3 2.500z" fill="#dcdcdc" />
          </svg>
        </button>
        <button aria-label="Battery" className="flex w-[30px] justify-center">
          <svg viewBox="0 0 20 14" className="h-[14px] w-5" aria-hidden="true">
            <path d="M5.500 2.500h12v10h-14V7M19 6v4" fill="none" stroke="#000" strokeWidth="1.200" />
            <path d="M6 4.500h10.500v6H6z" />
            <path d="M1 2.500h4V5L3 7 1 5zM1.800 0v2.500M4.200 0v2.500" fill="#ead5d8" stroke="#000" />
          </svg>
        </button>
        <button aria-label="Volume" className="flex w-[30px] justify-center">
          <svg viewBox="0 0 20 18" className="h-[18px] w-5" aria-hidden="true">
            <path d="M.6 6h2.500l4-4v14l-4-4H.6z" fill="none" stroke="#000" strokeWidth="1.200" />
            <path d="M10 7q1.500 2 0 4" fill="none" stroke="#000" strokeWidth="1.200" />
            <path d="M13 4.500q3.500 4.500 0 9M16 2q5 7 0 14" fill="none" stroke="#a99da0" strokeWidth="1.200" />
          </svg>
        </button>
        <button aria-label="Dropbox" className="flex w-[30px] justify-center">
          <FaDropbox className="size-[19px]" />
        </button>
        <button className="flex w-[85px] flex-col items-center text-[14px] leading-[23px]">
          <span>1:01 PM</span>
          <span>4/3/2021</span>
        </button>
        <button aria-label="26 notifications" className="relative ml-[13px] mr-[14px] flex h-[32px] w-8 items-start">
          <svg viewBox="0 0 20 20" className="mt-[2px] size-5" aria-hidden="true">
            <path d="M0 0h20v16h-9l-4 4v-4H0z" />
            <path d="M4 4.500h12M4 8h12M4 11.500h12" stroke="#fff" strokeWidth="1.200" />
          </svg>
          <span className="absolute left-[7px] top-[11px] flex h-[21px] w-[25px] items-center justify-center rounded-full border border-[#8d8d8d] bg-[#d4cfcfd9] text-[14px] font-semibold leading-none">
            26
          </span>
        </button>
        <span className="mr-[5px] h-[50px] w-px bg-[#b5a6a8]" />
      </div>
    </footer>
  );
}

export default function App() {
  return (
    <div className="flex h-screen flex-col overflow-hidden bg-white font-['Open_Sans',sans-serif] text-[17px] text-[#24292e]">
      <header className="shrink-0">
        <TabStrip />
        <AddressBar />
        <BookmarksBar />
      </header>
      <div className="flex min-h-0 flex-1">
        <div className="min-w-0 flex-1 overflow-hidden pt-5">
          <div className="mx-auto flex max-w-[1520px] gap-10">
            <FileBrowser />
            <Sidebar />
          </div>
        </div>
        <Scrollbar />
      </div>
      <Taskbar />
    </div>
  );
}
